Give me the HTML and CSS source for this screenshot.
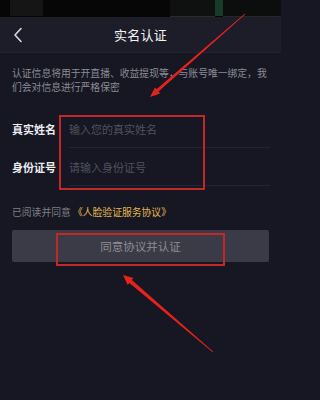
FILE: index.html
```html
<!DOCTYPE html>
<html lang="zh-CN">
<head>
<meta charset="utf-8">
<link rel="stylesheet" href="styles.css">
</head>
<body>
<div class="screen">
  <div class="status">
    <div class="blk blk-a"></div>
    <div class="blk blk-gap"></div>
    <div class="blk blk-b"></div>
    <div class="blk blk-green"></div>
    <div class="blk blk-c"></div>
  </div>
  <div class="nav">
    <svg class="back" width="10" height="16" viewBox="0 0 10 16"><path d="M8 1.5 L2 8 L8 14.5" fill="none" stroke="#d8d8dc" stroke-width="1.6" stroke-linecap="round" stroke-linejoin="round"/></svg>
    <div class="title">实名认证</div>
  </div>
  <p class="desc">认证信息将用于开直播、收益提现等，与账号唯一绑定，我们会对信息进行严格保密</p>
  <div class="form">
    <div class="row">
      <div class="label">真实姓名</div>
      <div class="field">输入您的真实姓名</div>
    </div>
    <div class="row">
      <div class="label">身份证号</div>
      <div class="field">请输入身份证号</div>
    </div>
  </div>
  <div class="agree">已阅读并同意 <span class="link">《人脸验证服务协议》</span></div>
  <div class="btn">同意协议并认证</div>

  <div class="mark mark-form"></div>
  <div class="mark mark-btn"></div>
  <svg class="arrows" width="281" height="400" viewBox="0 0 281 400">
    <polygon fill="#e5231b" points="245.3,14.3 158.5,91.5 160.1,93.4 150,97 154.9,87.4 156.5,89.3 244.7,13.7"/>
    <polygon fill="#e5231b" points="213.3,351.7 131.8,280.1 133.5,278.1 123,275 127.7,284.9 129.4,282.9 212.7,352.3"/>
  </svg>
</div>
</body>
</html>
```
FILE: styles.css
```css
html, body {
  margin: 0;
  padding: 0;
  background: #161722;
}
.screen {
  position: relative;
  width: 281px;
  height: 400px;
  overflow: hidden;
  background: #161722;
  font-family: "Noto Sans CJK SC", "Noto Sans", sans-serif;
}
.status {
  height: 17px;
  background: #060606;
  display: flex;
}
.blk { height: 16px; }
.blk-a { width: 33px; margin-left: 10px; background: #151515; }
.blk-gap { width: 127px; }
.blk-b { width: 45px; background: #0f1110; border-bottom: 1px solid #2a2a2a; }
.blk-green { width: 8px; background: #173b28; }
.blk-c { width: 58px; background: #0c0d0d; border-bottom: 1px solid #262626; }
.nav {
  height: 35px;
  background: #1c1d29;
  border-bottom: 1px solid #22232f;
  display: flex;
  align-items: center;
  justify-content: center;
  position: relative;
}
.back {
  position: absolute;
  left: 13px;
  top: 10px;
}
.title {
  color: #f2f2f4;
  font-size: 13px;
  letter-spacing: 0.3px;
}
.desc {
  margin: 0;
  padding: 13px 12px 0 12px;
  font-size: 9.8px;
  line-height: 14px;
  color: #8a8b94;
}
.form {
  margin-top: 16px;
}
.row {
  display: flex;
  height: 38px;
  align-items: stretch;
}
.label {
  width: 57px;
  padding-left: 12px;
  display: flex;
  align-items: center;
  color: #ececf0;
  font-size: 11px;
  font-weight: bold;
}
.field {
  flex: 1;
  margin-right: 11px;
  display: flex;
  align-items: center;
  border-bottom: 1px solid #23242f;
  color: #50515b;
  font-size: 11px;
}
.agree {
  margin: 19px 12px 0;
  font-size: 9.8px;
  line-height: 14px;
  color: #7d7e87;
}
.link {
  color: #e2b74e;
}
.btn {
  margin: 11px 12px 0;
  height: 32px;
  background: #3a3b46;
  border-radius: 2px;
  display: flex;
  align-items: center;
  justify-content: center;
  color: #8c8d95;
  font-size: 11.5px;
}
.mark {
  position: absolute;
  border: 2px solid #c2282a;
  box-sizing: border-box;
}
.mark-form {
  left: 59px;
  top: 115px;
  width: 146px;
  height: 75px;
}
.mark-btn {
  left: 56px;
  top: 233px;
  width: 169px;
  height: 33px;
}
.arrows {
  position: absolute;
  left: 0;
  top: 0;
}
```
